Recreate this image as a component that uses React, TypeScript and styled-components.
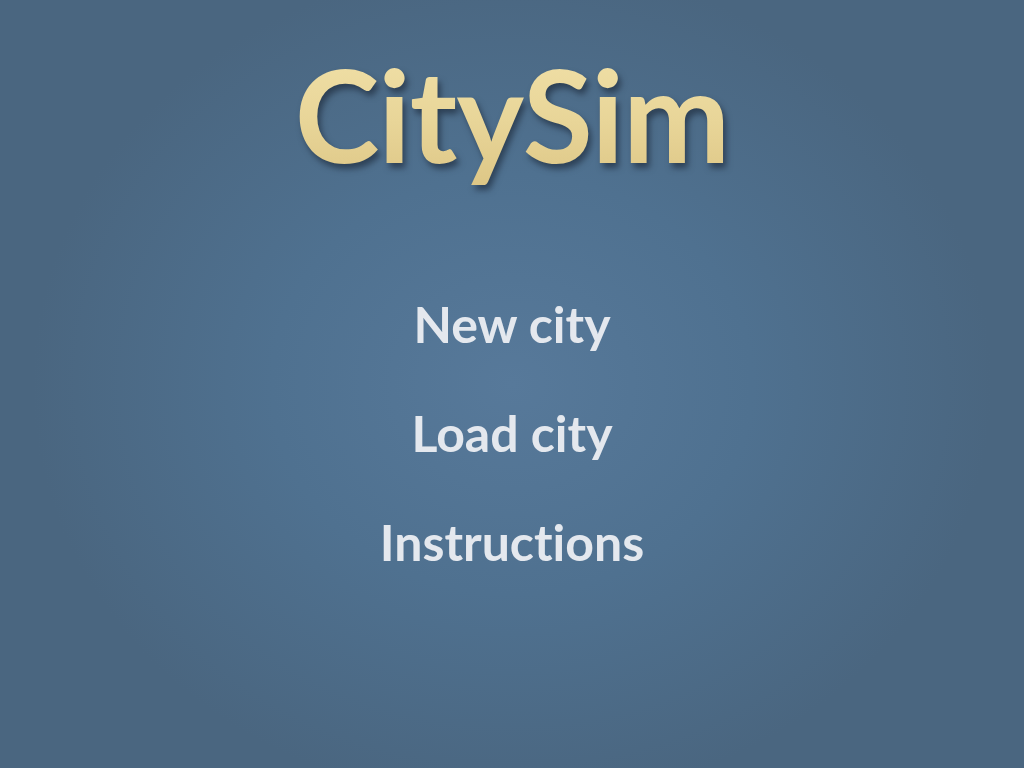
import React from "react";
import styled, { createGlobalStyle } from "styled-components";

const Global = createGlobalStyle`
  html, body { margin: 0; padding: 0; height: 100%; }
  #root { height: 100%; }
`;

const Screen = styled.div`
  width: 1024px;
  height: 768px;
  overflow: hidden;
  display: flex;
  flex-direction: column;
  align-items: center;
  background: radial-gradient(ellipse 480px 420px at 50% 50%, #57799a 0%, #4f7190 50%, #4a6680 100%);
  font-family: "Lato", "Open Sans", sans-serif;
  font-variant-ligatures: none;
`;

const Title = styled.h1`
  margin: 34px 0 0 0;
  font-size: 128px;
  font-weight: 700;
  line-height: 160px;
  letter-spacing: -1px;
  background: linear-gradient(180deg, #f2e2aa 0%, #e8d598 55%, #dcc584 100%);
  -webkit-background-clip: text;
  background-clip: text;
  color: transparent;
  filter: drop-shadow(3px 5px 3px rgba(18, 28, 42, 0.55));
`;

const Menu = styled.nav`
  margin-top: 100px;
  display: flex;
  flex-direction: column;
  align-items: center;
  gap: 49px;
`;

const Item = styled.div`
  font-size: 50px;
  font-weight: 700;
  line-height: 60px;
  color: #e4e8ee;
  cursor: pointer;
`;

export default function App() {
  return (
    <>
      <Global />
      <Screen>
        <Title>CitySim</Title>
        <Menu>
          <Item>New city</Item>
          <Item>Load city</Item>
          <Item>Instructions</Item>
        </Menu>
      </Screen>
    </>
  );
}
